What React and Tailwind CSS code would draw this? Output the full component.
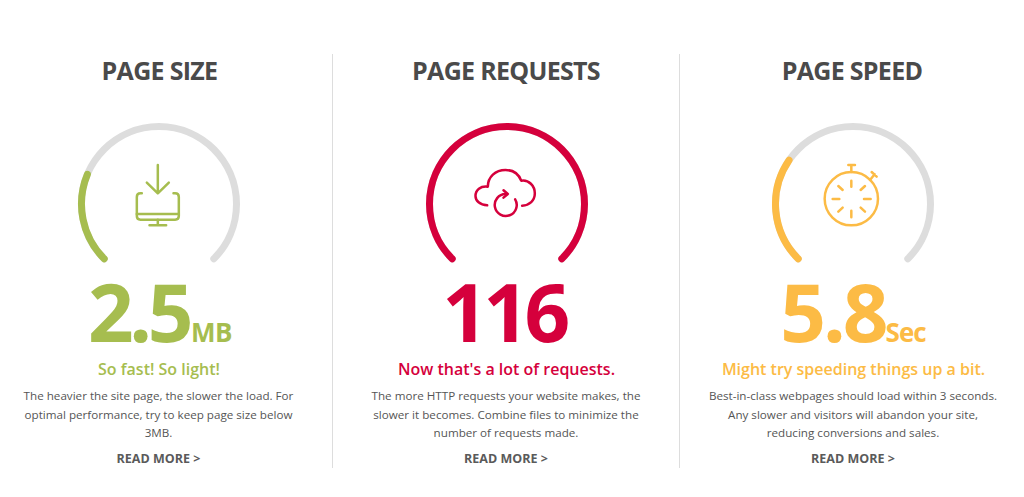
import React from 'react';

const CX = 85;
const CY = 85;
const R = 77.5;

function pointAt(deg) {
  const a = (deg * Math.PI) / 180;
  return [CX + R * Math.cos(a), CY + R * Math.sin(a)];
}

// sweep runs clockwise from bottom-left (135deg), 270deg in total
function arcPath(fraction) {
  const start = 135;
  const end = start + 270 * fraction;
  const [x1, y1] = pointAt(start);
  const [x2, y2] = pointAt(end);
  const large = 270 * fraction > 180 ? 1 : 0;
  return `M${x1} ${y1} A${R} ${R} 0 ${large} 1 ${x2} ${y2}`;
}

function Gauge({ color, fraction, offsetX, children }) {
  return (
    <svg width="170" height="150" viewBox="0 0 170 150" fill="none" className="block">
      <path d={arcPath(1)} stroke="#dddddd" strokeWidth="7" strokeLinecap="round" />
      <path d={arcPath(fraction)} stroke={color} strokeWidth="7" strokeLinecap="round" />
      <g
        transform={`translate(${offsetX} -9) scale(0.3333)`}
        stroke={color}
        strokeLinecap="round"
        strokeLinejoin="round"
      >
        {children}
      </g>
    </svg>
  );
}

function MonitorIcon() {
  return (
    <g strokeWidth="7.5">
      <path d="M295 165V250M262 218L295 250L328 218" />
      <path d="M247 250H243C236 250 232 254 232 261V318C232 325 236 329 243 329H347C354 329 358 325 358 318V261C358 254 354 250 347 250H342" />
      <path d="M232 312H358M295 329V345M270 346H320" />
    </g>
  );
}

function CloudIcon() {
  return (
    <g strokeWidth="7.5">
      <path d="M230 286C208 285 195 272 195 258C195 240 210 227 232 230C232 200 255 180 285 180C310 180 325 193 332 212C355 208 373 228 373 250C373 272 357 286 335 287" />
      <path d="M314 268A33 33 0 1 1 285 252" />
      <path d="M279 241L292 252L279 263" />
    </g>
  );
}

function StopwatchIcon() {
  return (
    <g strokeWidth="7.5">
      <circle cx="274" cy="266" r="80" />
      <path d="M274 165V186M265 165H285M330 210L344 193M335 186L350 200" />
      <path d="M274 212V230M274 302V322M218 267H238M312 267H332M235 228L248 240M315 228L302 240M235 305L248 293M315 305L302 293" />
    </g>
  );
}

const COLUMNS = [
  {
    title: 'PAGE SIZE',
    titleClass: 'ml-[2px]',
    color: '#a6bd4f',
    fraction: 0.25,
    offsetX: -14.5,
    gaugeClass: '',
    icon: <MonitorIcon />,
    value: '2.5',
    valueClass: 'tracking-[-4.5px]',
    rowClass: 'ml-[3px]',
    unit: 'MB',
    unitClass: 'text-[26px] font-bold tracking-[-0.5px] ml-[2px]',
    tagline: 'So fast! So light!',
    lines: [
      'The heavier the site page, the slower the load. For',
      'optimal performance, try to keep page size below',
      '3MB.',
    ],
  },
  {
    title: 'PAGE REQUESTS',
    titleClass: '',
    color: '#d5003c',
    fraction: 1,
    offsetX: -11.5,
    gaugeClass: 'ml-[2px]',
    icon: <CloudIcon />,
    value: '116',
    valueClass: 'tracking-[-4.5px]',
    rowClass: 'ml-[-4px]',
    tagline: "Now that's a lot of requests.",
    lines: [
      'The more HTTP requests your website makes, the',
      'slower it becomes. Combine files to minimize the',
      'number of requests made.',
    ],
  },
  {
    title: 'PAGE SPEED',
    titleClass: 'ml-[-2px]',
    color: '#fcbb45',
    fraction: 0.294,
    offsetX: -8,
    gaugeClass: '',
    icon: <StopwatchIcon />,
    value: '5.8',
    valueClass: 'tracking-[-3px]',
    rowClass: '',
    unit: 'Sec',
    unitClass: 'text-[26px] font-bold tracking-[-1px] ml-0',
    tagline: 'Might try speeding things up a bit.',
    lines: [
      'Best-in-class webpages should load within 3 seconds.',
      'Any slower and visitors will abandon your site,',
      'reducing conversions and sales.',
    ],
  },
];

function Column({ col, className }) {
  return (
    <div className={`flex flex-col items-center shrink-0 ${className}`}>
      <h2 className={`text-[25px] leading-[34px] font-bold tracking-[-0.7px] text-[#4a4a4a] mt-[-1px] ${col.titleClass}`}>
        {col.title}
      </h2>
      <div className={`mt-[32px] ${col.gaugeClass}`}>
        <Gauge color={col.color} fraction={col.fraction} offsetX={col.offsetX}>
          {col.icon}
        </Gauge>
      </div>
      <div className={`flex items-baseline h-[80px] mt-[2px] leading-[80px] ${col.rowClass}`} style={{ color: col.color }}>
        <span className={`text-[80px] font-bold ${col.valueClass}`}>{col.value}</span>
        {col.unit && <span className={col.unitClass}>{col.unit}</span>}
      </div>
      <p className="text-[16px] leading-[22px] font-semibold mt-[7px] ml-[1px]" style={{ color: col.color }}>
        {col.tagline}
      </p>
      <p className="text-[11.65px] leading-[18.5px] text-[#555555] text-center mt-[7px]">
        {col.lines.map((line) => (
          <span key={line} className="block whitespace-nowrap">{line}</span>
        ))}
      </p>
      <a className="text-[12.5px] leading-[18px] font-bold text-[#5a5a5a] mt-[7.5px]">READ MORE &gt;</a>
    </div>
  );
}

export default function App() {
  return (
    <div className="w-[1024px] h-[497px] overflow-hidden bg-white font-['Open_Sans',sans-serif]">
      <div className="flex pt-[54px] ml-[-15px] w-[1045px]">
        <Column col={COLUMNS[0]} className="w-[347px] h-[414px]" />
        <Column col={COLUMNS[1]} className="w-[347px] h-[414px] border-l border-[#dddddd]" />
        <Column col={COLUMNS[2]} className="w-[347px] h-[414px] border-l border-[#dddddd]" />
      </div>
    </div>
  );
}
